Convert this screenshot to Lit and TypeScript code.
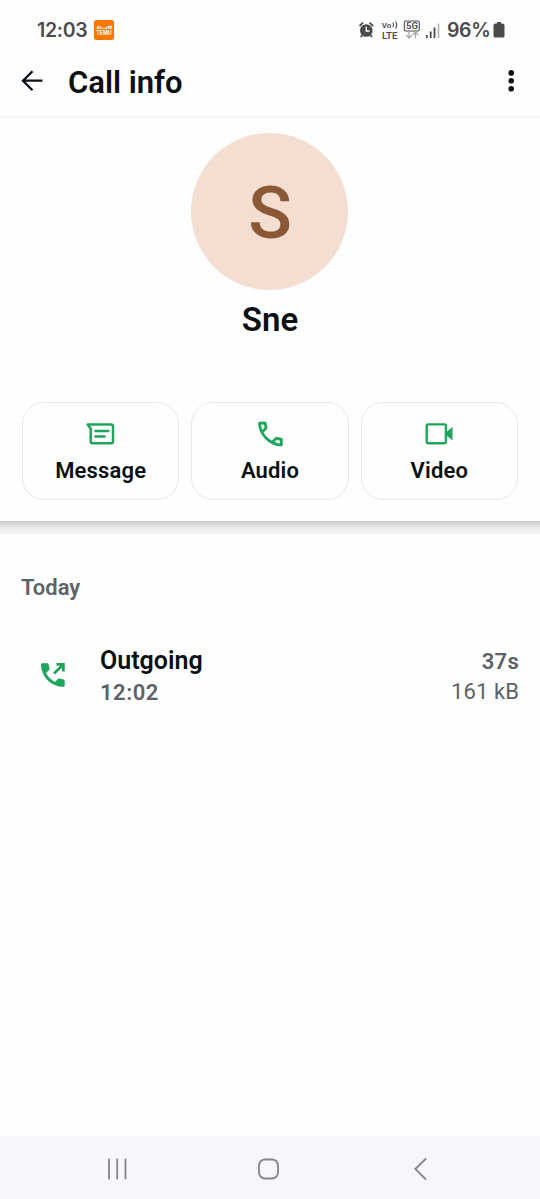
import { LitElement, html, svg, css } from "lit";
import { customElement } from "lit/decorators.js";

const messageIcon = svg`<svg width="30" height="24" viewBox="0 0 30 24" fill="none" stroke="#1fa65c" stroke-width="2.500" stroke-linejoin="round" stroke-linecap="round">
  <path d="M1.600 2.400H25a2 2 0 0 1 2 2V19.200a2 2 0 0 1-2 2H6.700a2 2 0 0 1-2-2V6.800z"/><path d="M9.500 9.100h12.800M9.500 14.400h9"/></svg>`;

const phoneOutline = svg`<svg width="34" height="34" viewBox="0 0 24 24" fill="#1fa65c"><path transform="translate(12.300 12) scale(.96) translate(-12 -12)" stroke="#1fa65c" stroke-width=".15" d="M19.950 21q-3.125 0-6.175-1.362t-5.550-3.863-3.862-5.550T3 4.050q0-.45.3-.75t.75-.3H8.100q.35 0 .625.238t.325.562l.65 3.500q.05.4-.025.675T9.400 8.450L6.975 10.900q.5.925 1.187 1.787t1.513 1.663q.775.775 1.625 1.438T13.100 17l2.350-2.350q.225-.225.588-.337t.712-.063l3.450.7q.35.1.575.363T21 15.900v4.050q0 .45-.3.750t-.75.300M6.025 9l1.650-1.650L7.250 5H5.025q.125 1.025.35 2.025T6.025 9m8.950 8.950q.975.425 1.988.675T19 18.950v-2.200l-2.350-.475z"/></svg>`;

const videoIcon = svg`<svg width="30" height="24" viewBox="0 0 30 24" fill="none" stroke="#1fa65c" stroke-width="2.400" stroke-linejoin="round">
  <rect x="2.700" y="2.400" width="19.200" height="18.800" rx="1.200"/><path fill="#1fa65c" stroke="none" d="M22 10.600l6.500-5.600v13.600l-6.500-5.600z"/></svg>`;

@customElement("app-root")
export class AppRoot extends LitElement {
  static styles = css`
    :host { display: flex; flex-direction: column; height: 1199px; background: #fefefe; color: #0b1014;
      font-family: Roboto, "Liberation Sans", sans-serif; font-weight: 600; overflow: hidden; }
    svg { display: block; flex: none; }
    .status { display: flex; align-items: center; height: 60px; padding: 0 35px 0 37px; color: #4b4b4d; box-sizing: border-box;
      font-family: Inter, sans-serif; font-size: 19.500px; line-height: 24px; }
    .clock { width: 57px; letter-spacing: -0.300px; }
    .tray { display: flex; align-items: center; margin-left: auto; }
    .pct { margin-left: 7px; width: 46px; letter-spacing: -0.400px; white-space: nowrap; }
    .bar { display: flex; align-items: center; height: 58px; padding: 0 19px 14px 20px; box-sizing: border-box;
      border-bottom: 2px solid #f7f7f7; }
    h1, h2, h3 { margin: 0; font-weight: 600; }
    h1 { font-size: 31px; line-height: 40px; margin: 3px auto 0 24px; }
    .hero { height: 404px; box-sizing: border-box; padding: 15px 22px 0; display: flex; flex-direction: column; align-items: center;
      border-bottom: 1px solid #cbcac9; }
    .avatar { width: 157px; height: 157px; border-radius: 50%; background: #f4ddd1; color: #8b5836; display: flex; margin-right: 1px;
      align-items: center; justify-content: center; font-size: 72px; font-weight: 500; line-height: 1; padding: 4px 0 0 1px; box-sizing: border-box; }
    .name { font-size: 33px; line-height: 40px; margin-top: 10px; }
    .actions { align-self: stretch; display: grid; grid-template-columns: repeat(3, 1fr); gap: 12px; margin-top: 62px; }
    .action { height: 98px; box-sizing: border-box; border: 1.500px solid #e7e7e7; border-radius: 22px; display: flex;
      flex-direction: column; align-items: center; padding-top: 14px; font-size: 22px; line-height: 28px; letter-spacing: 0.150px; }
    .glyph { height: 34px; display: flex; align-items: center; margin-bottom: 6px; }
    .shade { height: 12px; background: linear-gradient(#d2d0ce, #e7e5e4 35%, #f2f1ef 70%, #f5f4f2); }
    h3 { margin: 40px 21px 0; font-size: 22px; line-height: 28px; color: #5b6368; }
    .row { display: flex; align-items: center; margin: 43px 21px 0 40px; height: 62px; }
    .row > svg { margin-bottom: 2px; }
    .main { margin-left: 33px; }
    .kind { font-size: 25px; line-height: 32px; }
    .sub { font-size: 22px; line-height: 30px; padding-top: 1px; margin-bottom: -1px; color: #5b6368; letter-spacing: 0.500px; }
    .side { margin-left: auto; text-align: right; color: #5b6368; font-size: 22px; line-height: 30px; padding-top: 1px; }
    .size { font-weight: 400; letter-spacing: 0.100px; }
    .time { letter-spacing: 0.300px; }
    .nav { margin-top: auto; height: 63px; background: #f6f7fa; display: flex; align-items: center; justify-content: space-between;
      padding: 2px 109px 0 106px; box-sizing: border-box; }
  `;

  render() {
    return html`
      <div class="status">
        <span class="clock">12:03</span>
        <svg width="20" height="20" viewBox="0 0 20 20"><rect width="20" height="20" rx="2.500" fill="#fb7701"/>
          <path d="M2.800 8.700l1.200-2.200 1.200 2.200M6.300 6.300v2.400M7.500 8l2 .5M10.500 8.400h1.800l1.200-1.700M14.500 6.200h2.500v2h-2.500z" stroke="#fff" stroke-width="1.100" fill="none"/>
          <text x="2.300" y="14.600" textLength="15.400" lengthAdjust="spacingAndGlyphs" font-family="Inter, sans-serif" font-size="5.500" font-weight="700" fill="#fff">TEMU</text></svg>
        <div class="tray">
          <svg width="82" height="20" viewBox="0 0 82 20" fill="#4b4b4d">
            <circle cx="8.300" cy="10.500" r="6.300"/><path d="M4.300 15l-1.600 2M12.300 15l1.600 2M1.500 6L5 2.700M15.100 6L11.600 2.700" stroke="#4b4b4d" stroke-width="1.800"/>
            <path d="M8.300 6.800v4.200h3.300" fill="none" stroke="#fff" stroke-width="1.400"/>
            <g font-family="Roboto, sans-serif" font-weight="600">
              <text x="23.800" y="7.700" font-size="8" textLength="9.600" lengthAdjust="spacingAndGlyphs">Vo</text>
              <text x="24" y="18.600" font-size="9.400" textLength="15.500" lengthAdjust="spacingAndGlyphs">LTE</text>
              <text x="48" y="9.400" font-size="9.500" textLength="12" lengthAdjust="spacingAndGlyphs">5G</text></g>
            <path d="M34.800 2.500q1.500 2.400 0 4.800M37.500 1.500q2.500 3.400 0 6.800" fill="none" stroke="#4b4b4d" stroke-width="1.100"/>
            <rect x="46.300" y="1" width="15" height="10" rx="1.500" fill="none" stroke="#4b4b4d" stroke-width="1.100"/>
            <path d="M51 11.500v6.500M48 15l3 3L54 15M57.500 18.500v-6.500M54.800 15l2.700-3 2.700 3" fill="none" stroke="#a5a5a5" stroke-width="1.200"/>
            <path d="M68.800 15V18M72.700 11.500V18M76.500 7.500V18" stroke="#4b4b4d" stroke-width="1.800"/><path d="M80.500 3.500V18" stroke="#bbb" stroke-width="1.800"/>
          </svg>
          <span class="pct">96%</span>
          <svg width="12" height="16" viewBox="0 0 12 16" fill="#4b4b4d"><path d="M4 0h4v1.500h1.500a2 2 0 0 1 2 2V14a1.500 1.500 0 0 1-1.500 1.500H2A1.500 1.500 0 0 1 .5 14V3.500a2 2 0 0 1 2-2H4z"/></svg>
        </div>
      </div>
      <header class="bar">
        <svg width="24" height="24" viewBox="0 0 24 24" fill="none" stroke="#0b1014" stroke-width="2.300"><path d="M22.500 11.700H3M12.500 2.200L3 11.700l9.500 9.500"/></svg>
        <h1>Call info</h1>
        <svg width="20" height="24" viewBox="0 0 20 24" fill="#0b1014"><circle cx="10.200" cy="3.900" r="2.800"/><circle cx="10.200" cy="11.800" r="2.800"/><circle cx="10.200" cy="19.700" r="2.800"/></svg>
      </header>
      <section class="hero">
        <div class="avatar">S</div>
        <h2 class="name">Sne</h2>
        <div class="actions">
          <div class="action"><span class="glyph">${messageIcon}</span>Message</div>
          <div class="action"><span class="glyph">${phoneOutline}</span>Audio</div>
          <div class="action"><span class="glyph">${videoIcon}</span>Video</div>
        </div>
      </section>
      <div class="shade"></div>
      <h3>Today</h3>
      <div class="row">
        <svg width="27" height="27" viewBox="0 0 27 27" fill="#1fa65c">
          <path d="M2.200 1.200h5.200a1.200 1.200 0 0 1 1.200 1l.9 4.500a1.300 1.300 0 0 1-.35 1.200L6.100 11a20 20 0 0 0 8.900 8.900l3.100-3.050a1.300 1.300 0 0 1 1.200-.35l4.400.9a1.200 1.200 0 0 1 1 1.200v5a1.200 1.200 0 0 1-1.200 1.200C11.500 24.800 1 14.500 1 2.400a1.200 1.200 0 0 1 1.200-1.200z"/>
          <path d="M14 11.500L23.300 2.500M16.500 2.400h6.900v7" fill="none" stroke="#1fa65c" stroke-width="2.700"/></svg>
        <div class="main"><div class="kind">Outgoing</div><div class="sub">12:02</div></div>
        <div class="side"><div class="time">37s</div><div class="size">161 kB</div></div>
      </div>
      <nav class="nav">
        <svg width="22" height="22" viewBox="0 0 22 22" stroke="#858689" stroke-width="1.800" stroke-linecap="round"><path d="M3 1.500v19M11.200 1.500v19M19.500 1.500v19"/></svg>
        <svg width="22" height="22" viewBox="0 0 22 22" fill="none" stroke="#858689" stroke-width="1.800"><rect x="1" y="1.500" width="19" height="19" rx="6"/></svg>
        <svg width="22" height="22" viewBox="0 0 22 22" fill="none" stroke="#858689" stroke-width="1.800" stroke-linecap="round"><path d="M16.500 1L6.300 11l10.200 10"/></svg>
      </nav>`;
  }
}
